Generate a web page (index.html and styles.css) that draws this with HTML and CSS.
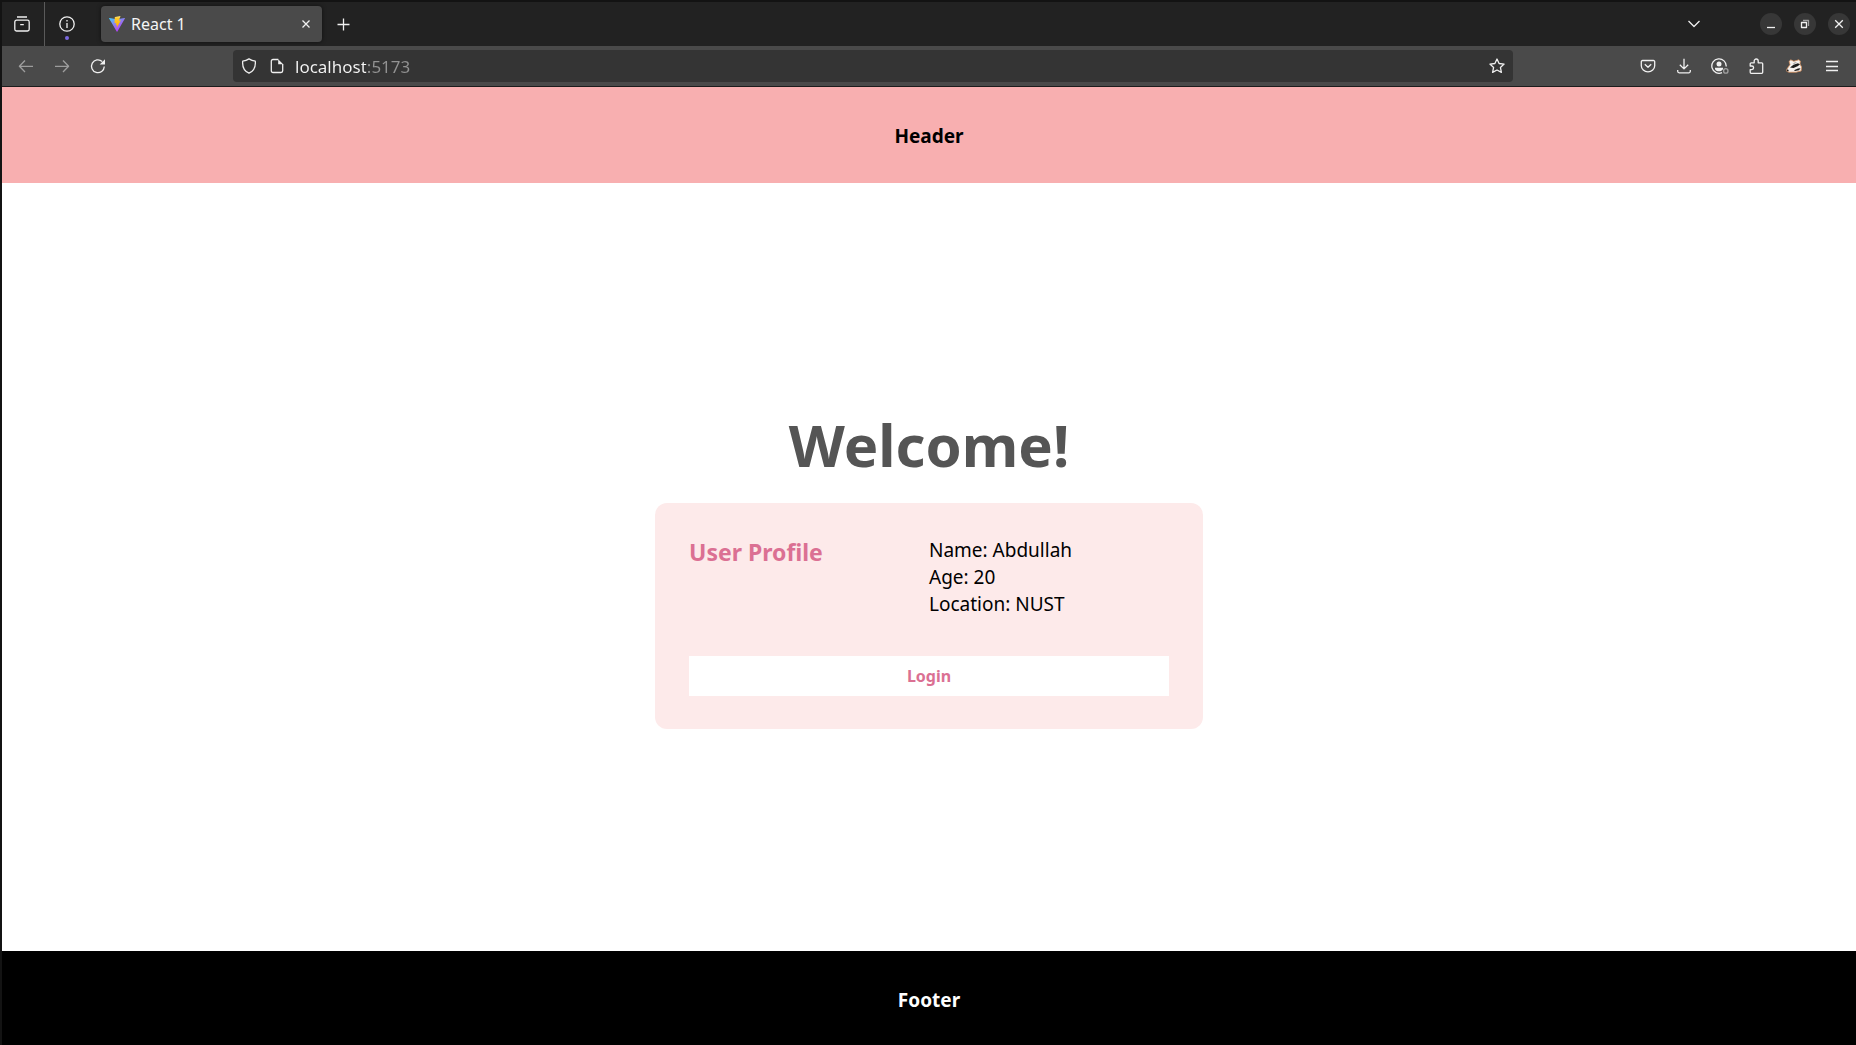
FILE: index.html
```html
<!DOCTYPE html>
<html lang="en">
<head>
<meta charset="utf-8">
<meta name="viewport" content="width=device-width, initial-scale=1">
<title>React 1</title>
<link rel="stylesheet" href="styles.css">
</head>
<body>
<div class="window">
  <div class="tabbar">
    <button class="view-button" aria-label="Recent browsing">
      <svg class="icon" viewBox="0 0 16 16"><path d="M3 1h10M2.500 4.200h11a1.700 1.700 0 0 1 1.700 1.700v7.400a1.700 1.700 0 0 1-1.700 1.700h-11A1.700 1.700 0 0 1 .8 13.300V5.900a1.700 1.700 0 0 1 1.700-1.700zM6.200 8.600h3.600"/></svg>
    </button>
    <button class="pinned-tab" aria-label="Pinned tab">
      <svg class="icon" viewBox="0 0 16 16"><circle cx="8" cy="8" r="7.200"/><path d="M8 7v5M8 4v1.600"/></svg>
      <span class="pinned-dot"></span>
    </button>
    <div class="tab">
      <svg class="favicon" viewBox="0 0 16 16">
        <defs>
          <linearGradient id="vite-body" x1="0" y1="0" x2=".7" y2="1"><stop offset="0" stop-color="#41d1ff"/><stop offset=".6" stop-color="#9a6cf0"/><stop offset="1" stop-color="#bd34fe"/></linearGradient>
          <linearGradient id="vite-bolt" x1="0" y1="0" x2="0" y2="1"><stop offset="0" stop-color="#ffea83"/><stop offset=".2" stop-color="#ffc928"/><stop offset="1" stop-color="#ffa800"/></linearGradient>
        </defs>
        <path fill="url(#vite-body)" d="M15.900 2.500 8.400 15.600a.4.4 0 0 1-.7 0L.1 2.500a.4.4 0 0 1 .4-.6L8 3.200l7.500-1.300a.4.4 0 0 1 .4.600z"/>
        <path fill="url(#vite-bolt)" d="M11.500 0 6 1.100a.2.2 0 0 0-.2.200L5.500 7a.2.2 0 0 0 .3.200l1.500-.3-.4 2.300 1.200-.3-.5 3.400 4.300-8-2 .4z"/>
      </svg>
      <span class="tab-title">React 1</span>
      <button class="tab-close" aria-label="Close tab"><svg class="icon" viewBox="0 0 16 16"><path d="m4.500 4.500 7 7m0-7-7 7"/></svg></button>
    </div>
    <button class="tool" aria-label="New tab"><svg class="icon" viewBox="0 0 16 16"><path d="M8.500 2.500v12M2.500 8.500h12"/></svg></button>
    <button class="tool all-tabs" aria-label="List all tabs"><svg class="icon" viewBox="0 0 16 16"><path d="m2.500 5 5.500 5.500L13.500 5"/></svg></button>
    <div class="window-controls">
      <button class="window-button" aria-label="Minimize"><svg class="icon" viewBox="0 0 16 16"><path d="M4 11.500h8"/></svg></button>
      <button class="window-button" aria-label="Restore"><svg class="icon" viewBox="0 0 16 16"><path d="M4.500 6.500h5v5h-5z"/><path class="faint" d="M6 4.500h5.500V10"/></svg></button>
      <button class="window-button" aria-label="Close"><svg class="icon" viewBox="0 0 16 16"><path d="m4.200 4.200 7.600 7.600m0-7.600-7.600 7.600"/></svg></button>
    </div>
  </div>

  <div class="toolbar">
    <button class="tool disabled" aria-label="Back"><svg class="icon" viewBox="0 0 16 16"><path d="M15 8.300H1.500M7 2.500 1.400 8.300 7 14"/></svg></button>
    <button class="tool disabled" aria-label="Forward"><svg class="icon" viewBox="0 0 16 16"><path d="M1 8.300h13.500M9 2.500l5.600 5.800L9 14"/></svg></button>
    <button class="tool" aria-label="Reload"><svg class="icon" viewBox="0 0 16 16"><path d="M14.300 8.500A6.400 6.400 0 1 1 12.200 3.500"/><path class="solid" d="M15 1.200v5.300H9.700z"/></svg></button>
    <div class="urlbar">
      <svg class="icon" viewBox="0 0 16 16"><path d="M8 .9c2 1.300 4 2 6.300 2.300.5 5.500-1.300 9.700-6.300 12-5-2.300-6.800-6.500-6.300-12C4 2.900 6 2.200 8 .900z"/></svg>
      <svg class="icon" viewBox="0 0 16 16"><path d="M9.300 1.500H4A1.700 1.700 0 0 0 2.300 3.200v9.600A1.700 1.700 0 0 0 4 14.500h8a1.700 1.700 0 0 0 1.700-1.700V6"/><path class="solid" d="M9.200 1.200v5h5z"/></svg>
      <input class="url" type="text" value="localhost:5173" aria-label="Address">
      <button class="star" aria-label="Bookmark this page"><svg class="icon" viewBox="0 0 16 16"><path d="m8 1 2.100 4.500 5 .6-3.700 3.300 1 5L8 12l-4.400 2.400 1-5L.9 6.100l5-.6z"/></svg></button>
    </div>
    <button class="tool" aria-label="Save to Pocket"><svg class="icon" viewBox="0 0 16 16"><path d="M2.500 2.500h11a1.200 1.200 0 0 1 1.200 1.200v4a6.700 6.200 0 0 1-13.400 0v-4a1.200 1.200 0 0 1 1.200-1.200zM4.800 6.300 8 9.300l3.200-3"/></svg></button>
    <button class="tool" aria-label="Downloads"><svg class="icon" viewBox="0 0 16 16"><path d="M8 .8v10M3.800 6.700 8 10.900l4.200-4.200M1.700 12v1.300a1.500 1.500 0 0 0 1.500 1.500h9.600a1.500 1.500 0 0 0 1.500-1.500V12"/></svg></button>
    <button class="tool" aria-label="Account"><svg class="icon account" viewBox="0 0 18 16"><path d="M11 14.600A7.200 7.200 0 1 1 15.200 8.500"/><circle class="solid" cx="8" cy="6" r="2.500"/><path class="solid" d="M4 9.800h8v1.500C10.500 13 9.500 13.300 8 13.300S5 13 4 11.300z"/><circle class="faint" cx="14.800" cy="12.900" r="2.200"/></svg></button>
    <button class="tool" aria-label="Extensions"><svg class="icon" viewBox="0 0 16 16"><path d="M6.200 4.800V3a2 2 0 0 1 4 0v1.800h3.500a1 1 0 0 1 1 1v8.500a1 1 0 0 1-1 1H3.200a1 1 0 0 1-1-1V11.600h1.600a1.800 1.800 0 0 0 0-3.600H2.200V5.800a1 1 0 0 1 1-1z"/></svg></button>
    <button class="tool extension" aria-label="Privacy Badger">
      <svg class="badger" viewBox="0 0 16 16">
        <path fill="#f4f0ec" stroke="#d08a58" stroke-width=".8" d="M.6 11.500 4 6.500 3 3.500 4.800 1.800l3 1.500L12.800 1.800l1.500 1.200-.3 3 1.600 3-.5 4-5 1.200L3 14.300l-2.200-1z"/>
        <path fill="#1d1c1c" d="M4 9.500 7.500 6.800 12 5.200l2 1.300-2.500 1.800-4 1.700zM.8 11.300l2 .7-.6 1.400-1.300-.5zM8 12.300l4-1.800 2.500-.3-1.500 2-4 .8z"/>
        <path fill="#8d8d8d" d="m6.500 6 2.200-1.600 2.300-.2L9 5.500z"/>
      </svg>
    </button>
    <button class="tool" aria-label="Menu"><svg class="icon" viewBox="0 0 16 16"><path d="M2 3.500h12M2 8.500h12M2 12.500h12"/></svg></button>
  </div>

  <header class="page-header">Header</header>
  <main class="page-main">
    <h1 class="welcome">Welcome!</h1>
    <section class="card">
      <div class="profile">
        <h2 class="profile-title">User Profile</h2>
        <div class="profile-info">
          <div>Name: Abdullah</div>
          <div>Age: 20</div>
          <div>Location: NUST</div>
        </div>
      </div>
      <button class="login">Login</button>
    </section>
  </main>
  <footer class="page-footer">Footer</footer>
</div>
</body>
</html>
```
FILE: styles.css
```css
* {
  box-sizing: border-box;
  margin: 0;
}

body {
  background: #fff;
  color: #000;
  font-family: "Noto Sans", sans-serif;
  font-size: 19px;
}

button {
  padding: 0;
  border: 0;
  background: none;
  color: inherit;
  font: inherit;
}

.window {
  display: flex;
  flex-direction: column;
  min-height: 100vh;
  border-top: 2px solid #131313;
  border-left: 2px solid #131313;
}

.icon {
  flex: none;
  display: block;
  width: 16px;
  height: 16px;
  fill: none;
  stroke: #f0f0f0;
  stroke-width: 1.3;
  stroke-linejoin: round;
}

.icon.account {
  width: 18px;
}

.icon .solid {
  fill: #f0f0f0;
  stroke: none;
}

.icon .faint {
  stroke: #a0a0a0;
}

/* Tab strip */
.tabbar {
  display: flex;
  align-items: center;
  height: 44px;
  padding-right: 6px;
  background: #222;
  color: #f5f5f5;
}

.view-button,
.pinned-tab {
  position: relative;
  display: grid;
  place-items: center;
  width: 43px;
  height: 44px;
}

.view-button {
  padding-right: 2px;
  border-right: 1px solid #5a5a5a;
}

.pinned-dot {
  position: absolute;
  top: 34px;
  left: 20px;
  width: 4px;
  height: 4px;
  border-radius: 50%;
  background: #7a68e0;
}

.tab {
  display: flex;
  align-items: center;
  gap: 6px;
  width: 221px;
  height: 36px;
  margin: 0 5px 0 13px;
  padding: 0 8px;
  border-radius: 4px;
  background: #4a4a4a;
  box-shadow: 0 0 4px #0008;
  font-size: 16px;
}

.favicon {
  flex: none;
  width: 16px;
  height: 16px;
}

.tab-title {
  flex: 1;
}

.tool {
  flex: none;
  display: grid;
  place-items: center;
  width: 32px;
  height: 32px;
}

.all-tabs {
  margin-left: auto;
}

.window-controls {
  display: flex;
  gap: 12px;
  margin-left: 50px;
}

.window-button {
  display: grid;
  place-items: center;
  width: 22px;
  height: 22px;
  border-radius: 50%;
  background: #373737;
}

/* Navigation toolbar */
.toolbar {
  display: flex;
  align-items: center;
  gap: 4px;
  height: 41px;
  padding: 0 8px;
  border-bottom: 1px solid #1c1c1c;
  background: #4a4a4a;
  color: #f5f5f5;
}

.disabled {
  opacity: 0.5;
}

.urlbar {
  flex: 1;
  display: flex;
  align-items: center;
  height: 32px;
  gap: 12px;
  margin: 0 115px;
  padding: 0 8px;
  border-radius: 4px;
  background: #343434;
}

.url {
  flex: 1;
  min-width: 0;
  margin-left: -2px;
  padding: 0;
  border: 0;
  outline: 0;
  background: linear-gradient(to right, #f5f5f5 71px, #929292 71px);
  background-clip: text;
  color: transparent;
  font: inherit;
  font-size: 17px;
}

.extension {
  width: 36px;
}

.badger {
  width: 16px;
  height: 16px;
}

/* Page */
.page-header,
.page-footer {
  display: grid;
  place-items: center;
  font-weight: 700;
}

.page-header {
  height: 96px;
  padding-top: 2px;
  background: #f8afb0;
}

.page-footer {
  height: 94px;
  padding-top: 4px;
  background: #000;
  color: #fff;
}

.page-main {
  flex: 1;
  display: flex;
  flex-direction: column;
  align-items: center;
  justify-content: center;
  gap: 19px;
}

.welcome {
  color: #555;
  font-size: 58px;
  line-height: 79px;
}

.card {
  display: flex;
  flex-direction: column;
  gap: 38px;
  width: 548px;
  max-width: 100%;
  padding: 34px 34px 33px;
  border-radius: 12px;
  background: #fdeaea;
}

.profile {
  display: grid;
  grid-template-columns: 1fr 1fr;
  line-height: 27px;
}

.profile-title {
  color: #db7093;
  font-size: 23px;
  line-height: 31px;
}

.login {
  height: 40px;
  background: #fff;
  color: #db7093;
  font-size: 16px;
  font-weight: 700;
}
```
